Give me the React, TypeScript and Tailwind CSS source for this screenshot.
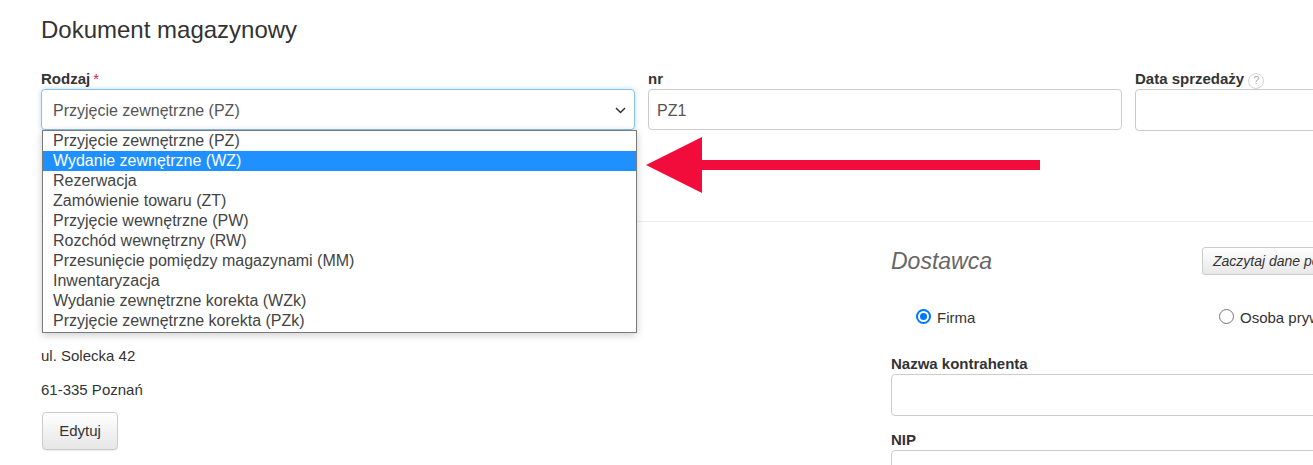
import React from 'react';

const rodzaje = [
  'Przyjęcie zewnętrzne (PZ)',
  'Wydanie zewnętrzne (WZ)',
  'Rezerwacja',
  'Zamówienie towaru (ZT)',
  'Przyjęcie wewnętrzne (PW)',
  'Rozchód wewnętrzny (RW)',
  'Przesunięcie pomiędzy magazynami (MM)',
  'Inwentaryzacja',
  'Wydanie zewnętrzne korekta (WZk)',
  'Przyjęcie zewnętrzne korekta (PZk)',
];

const Radio: React.FC<{ checked?: boolean; label: string }> = ({ checked, label }) => (
  <label className="flex items-start gap-[6px] text-[15px] leading-[20px] text-[#333]">
    {checked ? (
      <span className="mt-[1px] flex h-[15px] w-[15px] items-center justify-center rounded-full border-[2px] border-[#0075ff]">
        <span className="h-[7px] w-[7px] rounded-full bg-[#0075ff]" />
      </span>
    ) : (
      <span className="mt-[1px] h-[15px] w-[15px] rounded-full border border-[#767676]" />
    )}
    {label}
  </label>
);

const App: React.FC = () => {
  return (
    <div className="relative h-[465px] w-[1313px] overflow-hidden bg-white font-['Liberation_Sans',Arial,sans-serif] text-[#333]">
      <div className="pl-[41px] pt-[17px]">
        <h1 className="text-[24px] leading-[26px] text-[#333]">Dokument magazynowy</h1>

        <div className="mt-[26px] flex gap-[13px]">
          <div className="relative w-[594px] shrink-0">
            <div className="h-[20px] text-[15px] font-bold leading-[20px]">
              Rodzaj<span className="ml-[3px] font-normal text-[#e0223f]">*</span>
            </div>
            <div className="flex h-[41px] items-center justify-between rounded-[4px] border border-[#8cc1ec] pl-[11px] pr-[8px] pt-[3px] text-[16px] text-[#555] shadow-[0_0_5px_rgba(102,175,233,0.45)]">
              <span>Przyjęcie zewnętrzne (PZ)</span>
              <svg width="11" height="7" viewBox="0 0 11 7" fill="none" className="mb-[2px]">
                <path d="M1 1l4.5 4.5L10 1" stroke="#333" strokeWidth="1.5" />
              </svg>
            </div>

            {/* open dropdown list */}
            <ul className="absolute left-[1px] top-[61px] z-10 w-[595px] border border-[#7a7a7a] bg-white pb-[1px] text-[16px] leading-[20px] text-[#444] shadow-[0_2px_8px_rgba(0,0,0,0.2)]">
              {rodzaje.map((r, i) => (
                <li key={r} className={`h-[20px] pl-[10px] ${i === 1 ? 'bg-[#1e90ff] text-white' : ''}`}>
                  {r}
                </li>
              ))}
            </ul>
          </div>

          <div className="w-[474px] shrink-0">
            <div className="h-[20px] text-[15px] font-bold leading-[20px]">nr</div>
            <div className="flex h-[41px] items-center rounded-[4px] border border-[#ccc] pl-[8px] pt-[2px] text-[16px] text-[#555]">
              PZ1
            </div>
          </div>

          <div className="w-[351px] shrink-0">
            <div className="flex h-[20px] items-center gap-[4px] text-[15px] font-bold leading-[20px]">
              Data sprzedaży
              <span className="mt-[3px] flex h-[16px] w-[16px] items-center justify-center rounded-full border border-[#d4d4d4] text-[11px] font-normal leading-none text-[#aaa]">
                ?
              </span>
            </div>
            <div className="h-[42px] rounded-[4px] border border-[#ccc]" />
          </div>
        </div>

        <div className="mt-[90px] border-t border-[#eee]" />

        <div className="flex gap-[13px]">
          <div className="w-[837px] shrink-0 pt-[124px] text-[15px] leading-[20px]">
            <p className="mb-[14px]">ul. Solecka 42</p>
            <p className="mb-[12px]">61-335 Poznań</p>
            <button className="ml-[1px] h-[38px] w-[76px] rounded-[4px] border border-[#ccc] bg-gradient-to-b from-white to-[#e6e6e6] text-[15px] text-[#333] shadow-[0_1px_1px_rgba(0,0,0,0.08)]">
              Edytuj
            </button>
          </div>

          <div className="w-[600px] shrink-0 pt-[25px]">
            <div className="flex h-[28px] items-center">
              <h2 className="w-[311px] text-[23px] italic leading-[28px] text-[#666]">Dostawca</h2>
              <button className="h-[28px] whitespace-nowrap rounded-[3px] border border-[#ccc] bg-gradient-to-b from-white to-[#e8e8e8] px-[10px] text-[14px] italic text-[#333]">
                Zaczytaj dane po NIP
              </button>
            </div>

            <div className="mt-[33px] flex">
              <div className="w-[328px] pl-[25px]">
                <Radio checked label="Firma" />
              </div>
              <Radio label="Osoba prywatna" />
            </div>

            <div className="mt-[26px] h-[20px] text-[15px] font-bold leading-[20px]">Nazwa kontrahenta</div>
            <div className="h-[42px] rounded-[4px] border border-[#ccc]" />

            <div className="mt-[14px] h-[20px] text-[15px] font-bold leading-[20px]">NIP</div>
            <div className="h-[42px] rounded-[4px] border border-[#ccc]" />
          </div>
        </div>
      </div>

      {/* red annotation arrow */}
      <svg className="absolute left-[646px] top-[137px] z-20" width="394" height="57" viewBox="0 0 394 57">
        <polygon points="0,28 56,0 56,56" fill="#f20c3b" />
        <rect x="55" y="23" width="339" height="10" fill="#f20c3b" />
      </svg>
    </div>
  );
};

export default App;
